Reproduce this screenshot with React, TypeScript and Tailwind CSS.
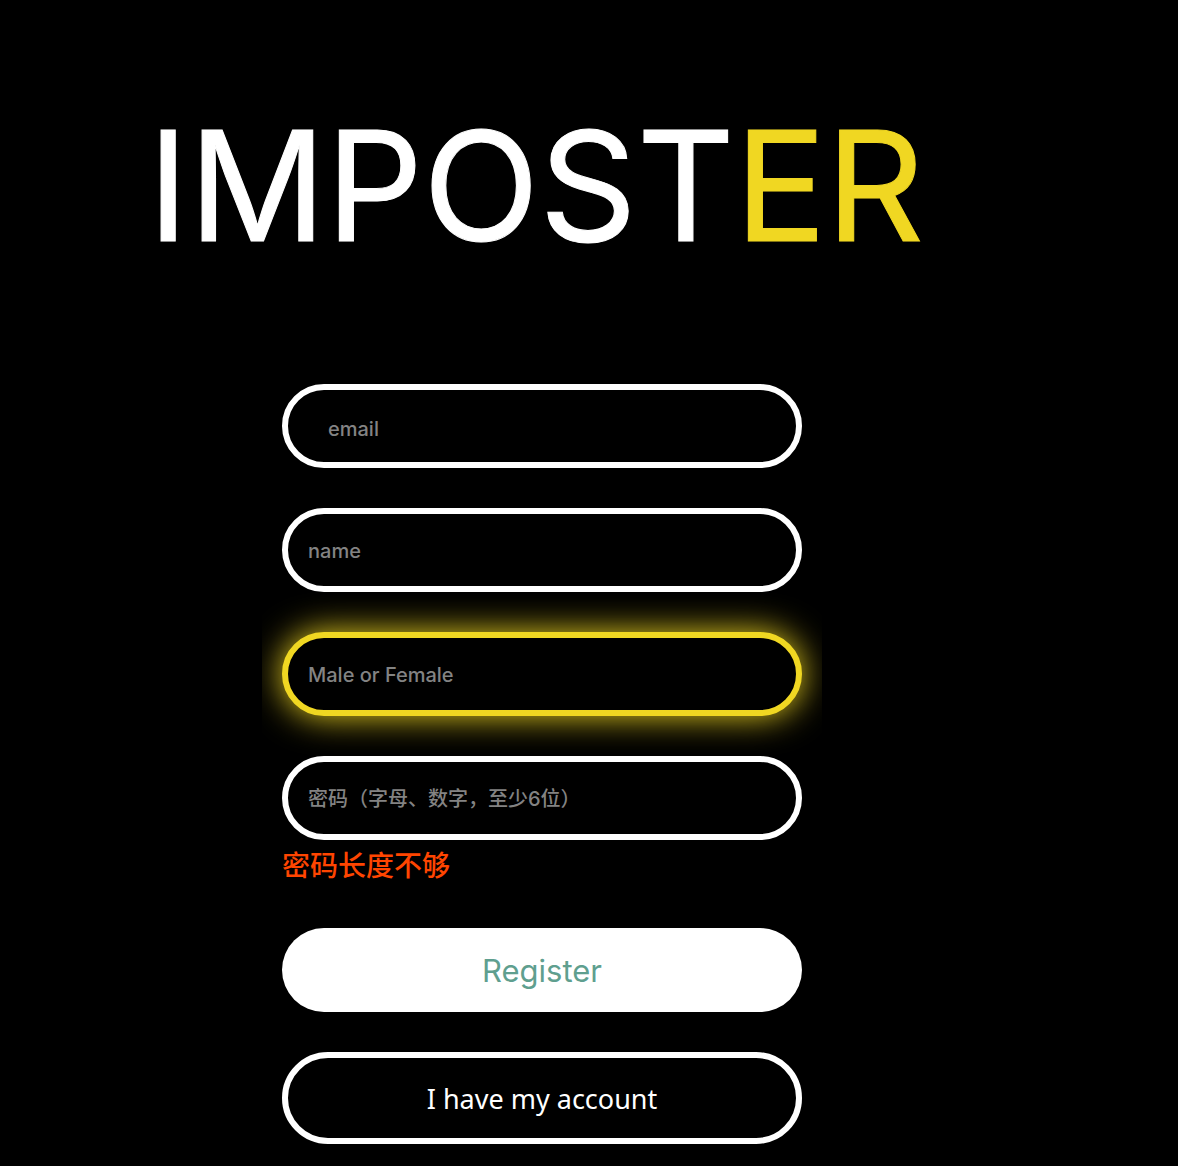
import React from "react";

const field =
  "block h-[84px] w-full rounded-full border-6 bg-black pt-0.5 pr-5 text-xl font-medium text-white outline-none placeholder:text-[#838383] placeholder:opacity-100";

export default function App() {
  return (
    <main className="flex min-h-screen flex-col items-center bg-black pt-[104px] pr-[94px] pb-[22px] font-['Inter','Noto_Sans_CJK_SC',sans-serif]">
      <h1 className="flex h-[164px] items-center pr-3 text-[152px] leading-none text-white [-webkit-text-stroke:1px_currentColor]">
        IMPOST<span className="text-[#f0d722]">ER</span>
      </h1>
      <form
        className="mt-[116px] flex w-full max-w-[560px] flex-col gap-10 overflow-x-clip px-5"
        onSubmit={(e) => e.preventDefault()}
      >
        <input type="email" aria-label="email" placeholder="email" className={`${field} border-white pt-1.5 pl-10`} />
        <input type="text" aria-label="name" placeholder="name" className={`${field} border-white pl-5`} />
        <input
          type="text"
          aria-label="Male or Female"
          placeholder="Male or Female"
          className={`${field} border-[#f0d722] pl-5 shadow-[0_0_34px_#f0d722]`}
        />
        <div>
          <input
            type="password"
            aria-label="密码"
            aria-describedby="password-error"
            placeholder="密码（字母、数字，至少6位）"
            className={`${field} border-white pl-5`}
          />
          <p id="password-error" className="h-12 pt-1 text-[28px] leading-[44px] font-medium text-[#ff4500]">
            密码长度不够
          </p>
        </div>
        <button type="submit" className="h-[84px] w-full rounded-full bg-white pt-0.5 text-[31px] text-[#5f9f8f]">
          Register
        </button>
        <button
          type="button"
          className="h-[92px] w-full rounded-full border-6 border-white pt-0.5 font-['Noto_Sans',sans-serif] text-[27px] text-white"
        >
          I have my account
        </button>
      </form>
    </main>
  );
}
